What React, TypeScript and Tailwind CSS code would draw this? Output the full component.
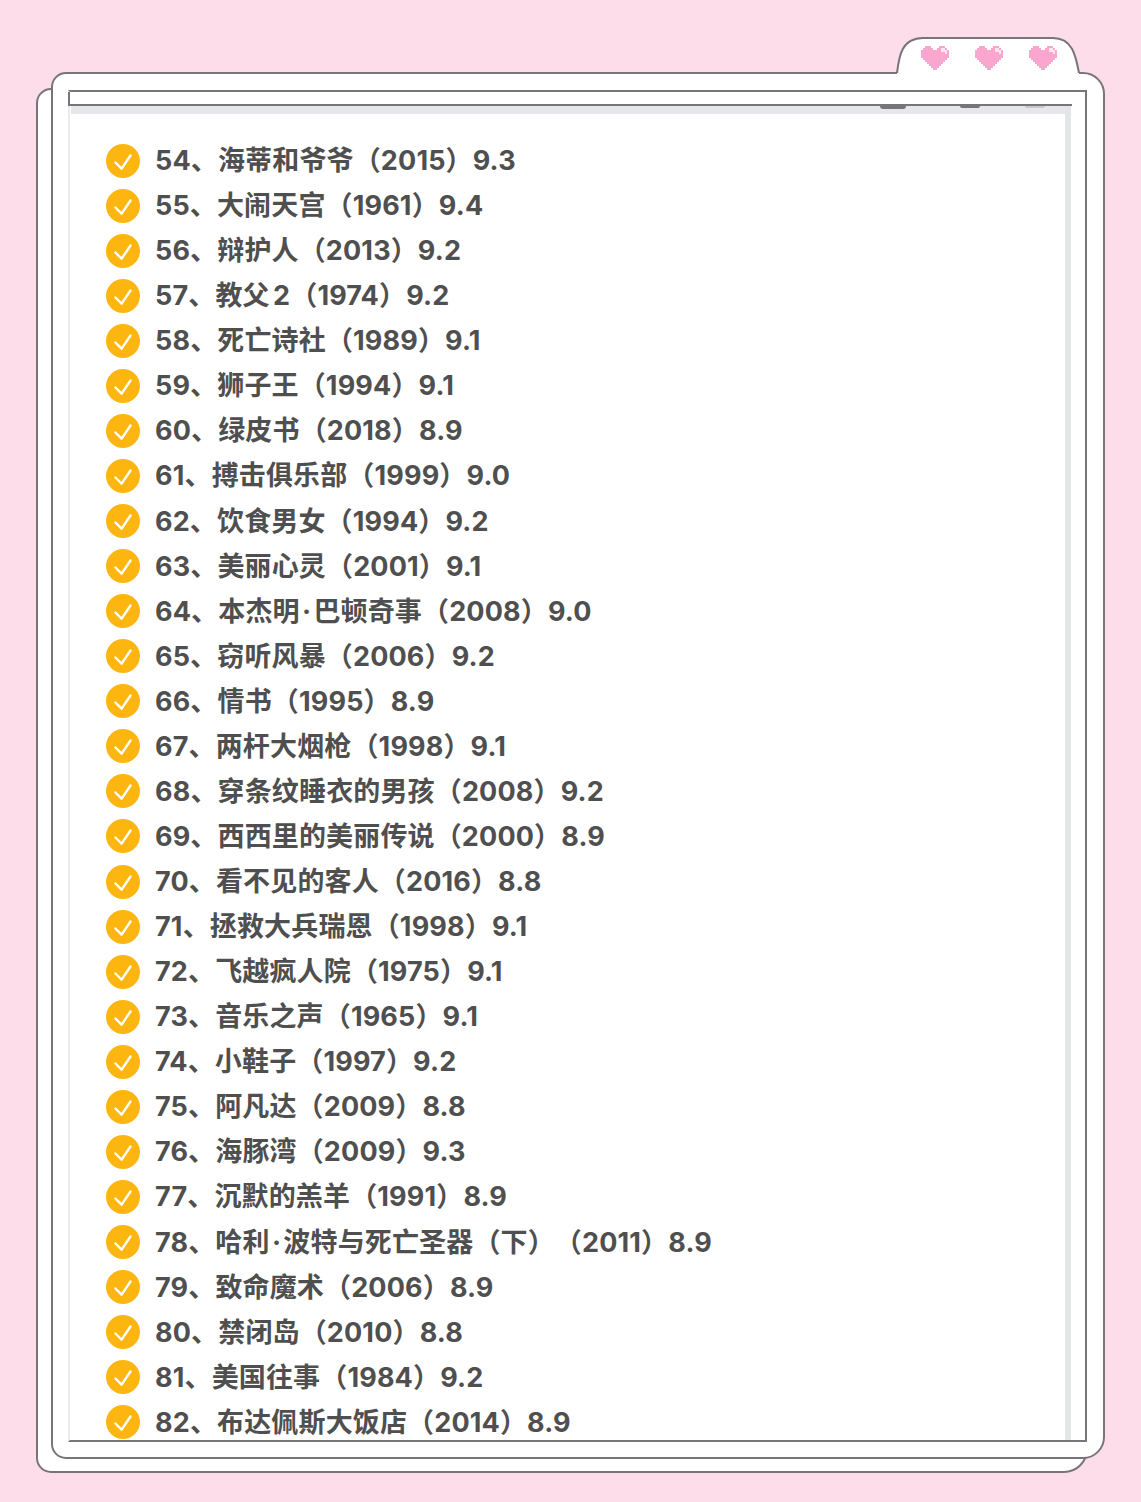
const movies = [
  "54、海蒂和爷爷（2015）9.3",
  "55、大闹天宫（1961）9.4",
  "56、辩护人（2013）9.2",
  "57、教父2（1974）9.2",
  "58、死亡诗社（1989）9.1",
  "59、狮子王（1994）9.1",
  "60、绿皮书（2018）8.9",
  "61、搏击俱乐部（1999）9.0",
  "62、饮食男女（1994）9.2",
  "63、美丽心灵（2001）9.1",
  "64、本杰明\u200a·\u200a巴顿奇事（2008）9.0",
  "65、窃听风暴（2006）9.2",
  "66、情书（1995）8.9",
  "67、两杆大烟枪（1998）9.1",
  "68、穿条纹睡衣的男孩（2008）9.2",
  "69、西西里的美丽传说（2000）8.9",
  "70、看不见的客人（2016）8.8",
  "71、拯救大兵瑞恩（1998）9.1",
  "72、飞越疯人院（1975）9.1",
  "73、音乐之声（1965）9.1",
  "74、小鞋子（1997）9.2",
  "75、阿凡达（2009）8.8",
  "76、海豚湾（2009）9.3",
  "77、沉默的羔羊（1991）8.9",
  "78、哈利\u200a·\u200a波特与死亡圣器（下）（2011）8.9",
  "79、致命魔术（2006）8.9",
  "80、禁闭岛（2010）8.8",
  "81、美国往事（1984）9.2",
  "82、布达佩斯大饭店（2014）8.9",
];

// pixel heart on a 16 x 16 grid
const Heart = () => (
  <svg width="32" height="32" viewBox="0 0 16 16" shapeRendering="crispEdges">
    <path
      fill="#fba6cf"
      d="M3 2h3v1h1v1h2V3h1V2h3v1h1v1h1v4h-1v1h-1v1h-1v1h-1v1h-1v1H9v1H7v-1H6v-1H5v-1H4v-1H3V9H2V8H1V4h1V3h1z"
    />
    <path fill="#fde4f0" d="M11 3h2v1h1v2h-1V5h-2z" />
  </svg>
);

const CheckBadge = () => (
  <span className="flex h-[34px] w-[34px] shrink-0 items-center justify-center rounded-full bg-[#fdb50f]">
    <svg width="22" height="22" viewBox="0 0 22 22" fill="none" stroke="#fff" strokeWidth="2.4" strokeLinecap="round" strokeLinejoin="round">
      <path d="M3.4 12.5l6.2 6.2L18.5 5.5" />
    </svg>
  </span>
);

export default function App() {
  return (
    <div className="h-[1502px] w-[1141px] overflow-hidden bg-[#fcdde9] pl-9 pt-[88px] font-['Inter','Noto_Sans_CJK_SC',sans-serif]">
      {/* back sheet */}
      <div className="h-[1385px] w-[1052px] rounded-[15px] rounded-br-[24px] border-2 border-[#77757a] bg-white pl-[13px]">
        {/* front sheet */}
        <div className="relative -mt-[18px] h-[1387px] w-[1054px] rounded-[15px] rounded-r-[22px] border-2 border-[#77757a] bg-white pl-[15px] pt-4">
          {/* tab with hearts */}
          <div className="absolute -top-[37px] left-[843px] flex h-[38px] w-[184px] items-center justify-center pl-0.5 pt-[3px]">
            <svg className="absolute inset-0" width="184" height="38" viewBox="0 0 184 38" fill="#fff" stroke="#77757a" strokeWidth="2">
              <path d="M1 36C3 20 5 1 27 1H157C177 1 180 20 183 36" />
              <path d="M1 37H183" stroke="#fff" />
            </svg>
            <div className="relative flex gap-[22px]">
              <Heart />
              <Heart />
              <Heart />
            </div>
          </div>
          {/* inner frame */}
          <div className="h-[1352px] w-[1019px] border-2 border-[#77757a] border-l-[#ececee] bg-white">
            <div className="-ml-[2px] h-[14px] w-[1004px] border-b-2 border-l-2 border-[#77757a]" />
            <div className="h-[1334px] w-[1001px] overflow-hidden border-r-[6px] border-[#e4e5e7]">
              <div className="relative ml-px h-[8px] bg-[#e6e7ea]">
                <span className="absolute left-[809px] top-0 h-[3px] w-[26px] rounded-b-sm bg-[#77757a]" />
                <span className="absolute left-[889px] top-0 h-[2px] w-5 rounded-b-sm bg-[#77757a]" />
                <span className="absolute left-[954px] top-0 h-[2px] w-5 rounded-b-sm bg-[#c9c9cc]" />
              </div>
              <ul className="flex flex-col pl-9 pt-6">
                {movies.map((movie) => (
                  <li key={movie} className="flex h-[45.07px] items-center gap-[15px]">
                    <CheckBadge />
                    <span className="whitespace-nowrap text-[27px] font-bold leading-none tracking-[0.15px] text-[#4f4f4f] [text-spacing-trim:space-all] [text-autospace:normal]">
                      {movie}
                    </span>
                  </li>
                ))}
              </ul>
            </div>
          </div>
        </div>
      </div>
    </div>
  );
}
